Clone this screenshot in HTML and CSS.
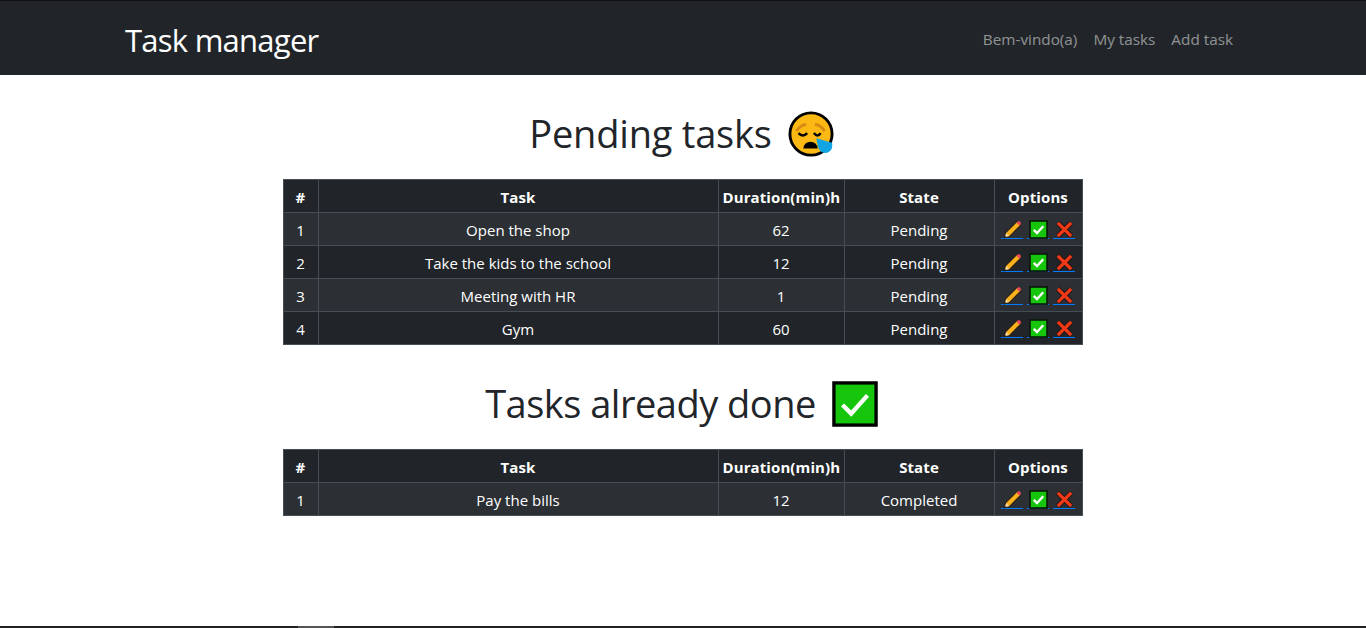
FILE: index.html
```html
<!DOCTYPE html>
<html lang="en">
<head>
    <meta charset="UTF-8">
    <meta name="viewport" content="width=device-width, initial-scale=1.0">
    <title>Task manager</title>
    <link rel="stylesheet" href="styles.css">
</head>
<body>

    <svg class="sprites" width="0" height="0">
        <symbol id="pencil" viewBox="0 0 20 20">
            <g transform="translate(-1 -1) scale(1.08)">
                <path d="M1.5 19 L3 13 L14.5 1.8 L19 6 L7.5 17.6 Z" fill="#2b2116"/>
                <path d="M3 17.6 L4 13.6 L14.5 3.2 L17.4 6 L7 16.4 Z" fill="#fbb11c"/>
                <path d="M14 3.7 L15.6 2.2 Q16.4 1.6 17.2 2.3 L18.2 3.4 Q18.8 4.2 18.2 5 L16.8 6.4 Z" fill="#e8495a"/>
                <path d="M3 17.6 L4 13.6 L7 16.4 Z" fill="#f3d9a8"/>
                <path d="M2.2 18.6 L2.8 16.4 L4.6 18 Z" fill="#222"/>
            </g>
        </symbol>
        <symbol id="check" viewBox="0 0 20 20">
            <rect x="1" y="1" width="18" height="18" fill="#16c60c" stroke="#0b1a0b" stroke-width="1.8"/>
            <path d="M5 10.4 L8.4 13.8 L15 6.6" fill="none" stroke="#fff" stroke-width="2.4"/>
        </symbol>
        <symbol id="cross" viewBox="0 0 20 20">
            <path d="M3 3 L17 17 M17 3 L3 17" stroke="#2a1512" stroke-width="5.4"/>
            <path d="M3 3 L17 17 M17 3 L3 17" stroke="#f03a17" stroke-width="3.4"/>
        </symbol>
    </svg>

    <nav class="navbar">
        <a class="brand" href="#">Task manager</a>
        <div class="nav-links">
            <a href="#">Bem-vindo(a)</a>
            <a href="#">My tasks</a>
            <a href="#">Add task</a>
        </div>
    </nav>

    <main class="content">
        <h1 class="pending"><span>Pending tasks</span>
            <svg class="title-icon" viewBox="0 0 48 48">
                <circle cx="24" cy="24" r="22" fill="#fcb813" stroke="#000" stroke-width="3"/>
                <path d="M9 21 Q12 15 19 14 M38 21 Q35 15 28 14" fill="none" stroke="#d68a12" stroke-width="3"/>
                <path d="M11 23 Q15.5 28 20 23 M27 23 Q31 28 34 23" fill="none" stroke="#000" stroke-width="2.6"/>
                <path d="M16 39 Q17 32 23.5 32 Q30 32 31 39 Z" fill="#000"/>
                <path d="M29.5 28.5 L46 33 Q47.5 41 41 43.5 Q33 45 31 36 Z" fill="#12a5e6"/>
            </svg>
        </h1>
        <table class="task-table">
            <colgroup>
                <col class="col-num"><col class="col-task"><col class="col-dur"><col class="col-state"><col class="col-opt">
            </colgroup>
            <thead>
                <tr><th>#</th><th>Task</th><th>Duration(min)h</th><th>State</th><th>Options</th></tr>
            </thead>
            <tbody>
                <tr>
                    <td>1</td><td>Open the shop</td><td>62</td><td>Pending</td>
                    <td><div class="options"><a href="#"><svg><use href="#pencil"/></svg></a><a href="#"><svg><use href="#check"/></svg></a><a href="#"><svg><use href="#cross"/></svg></a></div></td>
                </tr>
                <tr>
                    <td>2</td><td>Take the kids to the school</td><td>12</td><td>Pending</td>
                    <td><div class="options"><a href="#"><svg><use href="#pencil"/></svg></a><a href="#"><svg><use href="#check"/></svg></a><a href="#"><svg><use href="#cross"/></svg></a></div></td>
                </tr>
                <tr>
                    <td>3</td><td>Meeting with HR</td><td>1</td><td>Pending</td>
                    <td><div class="options"><a href="#"><svg><use href="#pencil"/></svg></a><a href="#"><svg><use href="#check"/></svg></a><a href="#"><svg><use href="#cross"/></svg></a></div></td>
                </tr>
                <tr>
                    <td>4</td><td>Gym</td><td>60</td><td>Pending</td>
                    <td><div class="options"><a href="#"><svg><use href="#pencil"/></svg></a><a href="#"><svg><use href="#check"/></svg></a><a href="#"><svg><use href="#cross"/></svg></a></div></td>
                </tr>
            </tbody>
        </table>

        <h1 class="done"><span>Tasks already done</span>
            <svg class="title-icon" viewBox="0 0 48 48">
                <rect x="2" y="2" width="44" height="44" fill="#16c60c" stroke="#000" stroke-width="3.5"/>
                <path d="M11 25 L20 34 L37 15" fill="none" stroke="#fff" stroke-width="4.5"/>
            </svg>
        </h1>
        <table class="task-table">
            <colgroup>
                <col class="col-num"><col class="col-task"><col class="col-dur"><col class="col-state"><col class="col-opt">
            </colgroup>
            <thead>
                <tr><th>#</th><th>Task</th><th>Duration(min)h</th><th>State</th><th>Options</th></tr>
            </thead>
            <tbody>
                <tr>
                    <td>1</td><td>Pay the bills</td><td>12</td><td>Completed</td>
                    <td><div class="options"><a href="#"><svg><use href="#pencil"/></svg></a><a href="#"><svg><use href="#check"/></svg></a><a href="#"><svg><use href="#cross"/></svg></a></div></td>
                </tr>
            </tbody>
        </table>
    </main>

    <div class="bottom-bar"><span class="bottom-thumb"></span></div>

</body>
</html>
```

FILE: styles.css
```css
* {
    box-sizing: border-box;
}

html, body {
    height: 100%;
}

body {
    margin: 0;
    display: flex;
    flex-direction: column;
    font-family: "Open Sans", "Noto Sans", sans-serif;
    font-size: 16px;
    line-height: 24px;
    color: #212529;
    background-color: #fff;
    overflow: hidden;
}

a {
    text-decoration: none;
}

.sprites {
    display: block;
    height: 0;
}

.navbar {
    height: 75px;
    flex: none;
    display: flex;
    align-items: center;
    justify-content: space-between;
    padding: 2px 125px 0;
    background-color: #212529;
    border-top: 1px solid #111;
}

.brand {
    padding-top: 2px;
    color: #fff;
    font-size: 31px;
    line-height: 40px;
    letter-spacing: -0.75px;
}

.nav-links {
    display: flex;
    gap: 16px;
    padding-right: 8px;
}

.nav-links a {
    color: rgba(255, 255, 255, .5);
    font-size: 15.3px;
}

.content {
    flex: 1;
    display: flex;
    flex-direction: column;
    align-items: center;
}

h1 {
    margin: 32px 0 18px;
    height: 54px;
    padding-right: 3px;
    display: flex;
    align-items: center;
    justify-content: center;
    gap: 16px;
    font-size: 38px;
    font-weight: 400;
    line-height: 54px;
}

h1.pending {
    letter-spacing: -0.2px;
}

h1.done {
    letter-spacing: -0.5px;
}

h1 span {
    margin-top: -2px;
}

.title-icon {
    width: 46px;
    height: 46px;
}

.task-table {
    width: 799px;
    margin-right: 1px;
    table-layout: fixed;
    border-collapse: collapse;
    color: #fff;
    background-color: #212529;
    font-size: 15px;
}

.col-num { width: 35px; }
.col-task { width: 400px; }
.col-dur { width: 126px; }
.col-state { width: 150px; }
.col-opt { width: 88px; }

.task-table th,
.task-table td {
    height: 33px;
    padding: 5px 4px 3px;
    border: 1px solid #454d55;
    text-align: center;
    white-space: nowrap;
}

.task-table th {
    font-weight: 700;
    letter-spacing: .1px;
}

.task-table tbody tr:nth-child(odd) {
    background-color: #2c3034;
}

.options {
    display: flex;
    justify-content: center;
    gap: 4px;
    margin-bottom: 2px;
}

.options a {
    width: 22px;
    height: 20px;
    display: flex;
    align-items: flex-end;
    justify-content: center;
    border-bottom: 1px solid #007bff;
}

.options svg {
    display: block;
    flex: none;
    width: 19px;
    height: 19px;
    margin-bottom: -1px;
}

.bottom-bar {
    height: 2px;
    flex: none;
    background-color: #222;
}

.bottom-thumb {
    display: block;
    width: 36px;
    height: 2px;
    margin-left: 298px;
    background-color: #555;
}
```
